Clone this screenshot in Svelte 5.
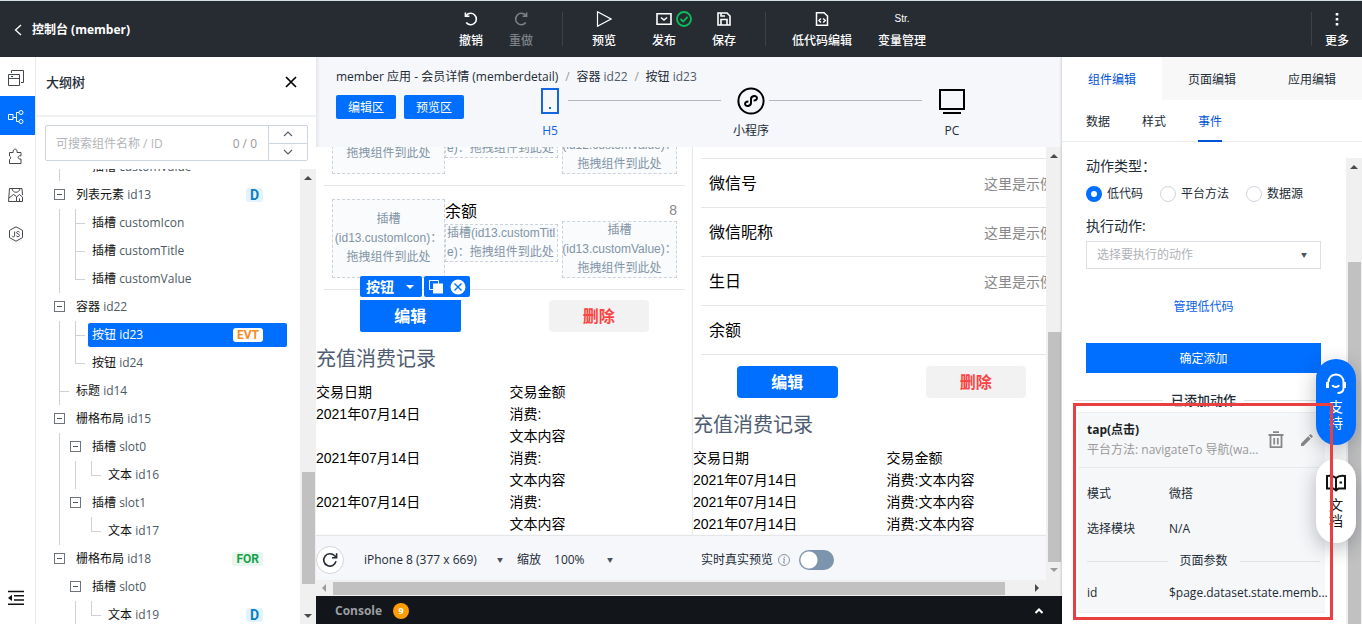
<script lang="ts">
  type Guide = 'line' | 'tee' | 'elbow' | 'box' | 'blank';
  type Node = { name: string; id: string; guides: Guide[]; badge?: string };

  const nodes: Node[] = [
    { name: '插槽', id: 'customValue', guides: ['line', 'elbow'] },
    { name: '列表元素', id: 'id13', guides: ['box'], badge: 'D' },
    { name: '插槽', id: 'customIcon', guides: ['line', 'tee'] },
    { name: '插槽', id: 'customTitle', guides: ['line', 'tee'] },
    { name: '插槽', id: 'customValue', guides: ['line', 'elbow'] },
    { name: '容器', id: 'id22', guides: ['box'] },
    { name: '按钮', id: 'id23', guides: ['line', 'tee'], badge: 'EVT' },
    { name: '按钮', id: 'id24', guides: ['line', 'elbow'] },
    { name: '标题', id: 'id14', guides: ['tee'] },
    { name: '栅格布局', id: 'id15', guides: ['box'] },
    { name: '插槽', id: 'slot0', guides: ['line', 'box'] },
    { name: '文本', id: 'id16', guides: ['line', 'line', 'elbow'] },
    { name: '插槽', id: 'slot1', guides: ['line', 'box'] },
    { name: '文本', id: 'id17', guides: ['line', 'blank', 'elbow'] },
    { name: '栅格布局', id: 'id18', guides: ['box'], badge: 'FOR' },
    { name: '插槽', id: 'slot0', guides: ['blank', 'box'] },
    { name: '文本', id: 'id19', guides: ['blank', 'line', 'elbow'], badge: 'D' },
  ];
  let selected = 'id23';

  const slotItems = ['id12', 'id13'];
  const fields = [
    { label: '微信号', value: '这里是示例' },
    { label: '微信昵称', value: '这里是示例' },
    { label: '生日', value: '这里是示例' },
    { label: '余额', value: '' },
  ];
  const dates = ['2021年07月14日', '2021年07月14日', '2021年07月14日'];

  const panelTabs = ['组件编辑', '页面编辑', '应用编辑'];
  let panelTab = '组件编辑';
  const subTabs = ['数据', '样式', '事件'];
  let subTab = '事件';
  const actionTypes = ['低代码', '平台方法', '数据源'];
  let actionType = '低代码';

  let keyword = '';
  let livePreview = false;
</script>

{#snippet caret(dir: string)}
  <svg class="caret" width="8" height="8" viewBox="0 0 8 8" fill="currentColor" aria-hidden="true">
    {#if dir === 'up'}<path d="M0 6L4 2L8 6Z" />
    {:else if dir === 'down'}<path d="M0 2L4 6L8 2Z" />
    {:else if dir === 'left'}<path d="M6 0L2 4L6 8Z" />
    {:else}<path d="M2 0L6 4L2 8Z" />{/if}
  </svg>
{/snippet}

{#snippet records(inline: boolean)}
  <h2 class="records_title">充值消费记录</h2>
  <div class="records">
    <div>交易日期</div>
    <div>交易金额</div>
    {#each dates as date}
      <div>{date}</div>
      <div>消费:{#if !inline}<br />{/if}文本内容</div>
    {/each}
  </div>
{/snippet}

<div class="app">
  <header class="header">
    <div class="header_left">
      <a href="#console" class="back">
        <svg width="8" height="12" viewBox="0 0 8 12" fill="none" stroke="currentColor" stroke-width="1.3"><path d="M7 1L1.5 6L7 11" /></svg>
        控制台 (member)
      </a>
    </div>
    <nav class="tools">
      <button class="tool">
        <svg width="16" height="16" viewBox="0 0 16 16" fill="none" stroke="currentColor" stroke-width="1.6"><path d="M3.4 4.2A5.7 5.7 0 1 1 3.2 11.6M2.4 1.5V5.2H6.4" /></svg>
        撤销
      </button>
      <button class="tool" disabled>
        <svg width="16" height="16" viewBox="0 0 16 16" fill="none" stroke="currentColor" stroke-width="1.6"><path d="M12.6 4.2A5.7 5.7 0 1 0 12.8 11.6M13.6 1.5V5.2H9.6" /></svg>
        重做
      </button>
      <span class="sep sep_a"></span>
      <button class="tool wide">
        <svg width="16" height="16" viewBox="0 0 16 16" fill="none" stroke="currentColor" stroke-width="1.2"><path d="M1.5 0.8L15 8L1.5 15.2Z" /></svg>
        预览
      </button>
      <button class="tool wide">
        <span class="publish">
          <svg width="16" height="16" viewBox="0 0 16 16" fill="none" stroke="currentColor" stroke-width="1.6"><path d="M1 2.8H15V13.2H1ZM5 6.5L8 9L11 6.5" /></svg>
          <svg class="ok" width="16" height="16" viewBox="0 0 16 16" fill="none" stroke="#0abf5b" stroke-width="1.8"><circle cx="8" cy="8" r="7" /><path d="M4.5 8L7.2 10.5L11.6 5.8" /></svg>
        </span>
        发布
      </button>
      <button class="tool wide">
        <svg width="16" height="16" viewBox="0 0 16 16" fill="none" stroke="currentColor" stroke-width="1.6"><path d="M2 2H11L14 5V14H2ZM5 14V8.5H11V14M5 2V5H9" /></svg>
        保存
      </button>
      <span class="sep sep_b"></span>
      <button class="tool widest">
        <svg width="16" height="16" viewBox="0 0 16 16" fill="none" stroke="currentColor" stroke-width="1.5"><path d="M2.5 1.8H10L13.5 5V14.2H2.5ZM7 7.5L5 9.5L7 11.5M9.2 7.5L11.2 9.5L9.2 11.5" /></svg>
        低代码编辑
      </button>
      <button class="tool widest">
        <span class="str">Str.</span>
        变量管理
      </button>
    </nav>
    <div class="header_right">
      <span class="sep"></span>
      <button class="tool">
        <svg width="16" height="16" viewBox="0 0 16 16" fill="currentColor"><path d="M6.7 2H9.3V4.6H6.7ZM6.7 7H9.3V9.6H6.7ZM6.7 12H9.3V14.6H6.7Z" /></svg>
        更多
      </button>
    </div>
  </header>

  <div class="body">
    <nav class="rail">
      <button aria-label="页面">
        <svg width="16" height="16" viewBox="0 0 16 16" fill="none" stroke="currentColor"><path d="M0.5 4.5H11.5V15.5H0.5ZM0.5 8.5H11.5M3 6.5H5M3.5 3V0.5H15.5V12.5H13" /></svg>
      </button>
      <button class="active" aria-label="大纲树">
        <svg width="16" height="16" viewBox="0 0 16 16" fill="none" stroke="currentColor"><path d="M0.5 5.5H5V10.5H0.5ZM5 8.5H8M11 3.5H8.5V12.5H11" /><circle cx="13" cy="3.5" r="2" /><circle cx="13" cy="12.5" r="2" /></svg>
      </button>
      <button aria-label="组件">
        <svg width="16" height="16" viewBox="0 0 16 16" fill="none" stroke="currentColor"><path d="M1.5 4.5H5.2C4.2 0 10 0 9 4.5H13V7.8C9.2 7 9.2 11.8 13 11V15.5H1.5V11.5C3.2 10.5 3.2 9 1.5 8Z" /></svg>
      </button>
      <button aria-label="素材">
        <svg width="16" height="16" viewBox="0 0 16 16" fill="none" stroke="currentColor"><path d="M8.5 14.5H0.5L1.5 1.5H14L14.5 8M4 1.5C4.5 6.5 11.5 6.5 12 1.5M1 11L5.5 7.5L8.5 9.5M8.5 14.5V10L11.5 7.5L14.5 10V14.5ZM11.5 14V11.5" /></svg>
      </button>
      <button aria-label="脚本">
        <svg width="16" height="16" viewBox="0 0 16 16" fill="none" stroke="currentColor"><path d="M8 0.8L14.5 4.4V11.6L8 15.2L1.5 11.6V4.4ZM6.6 5.5V9.8C6.6 11.2 4.4 11.2 4.2 9.8M11.5 6.2C10.5 5 8.5 5.4 8.6 6.8C8.8 8.2 11.5 7.8 11.5 9.5C11.4 11 9 11 8.3 9.8" /></svg>
      </button>
      <button class="collapse" aria-label="收起">
        <svg width="18" height="16" viewBox="0 0 18 16" fill="none" stroke="currentColor" stroke-width="1.5"><path d="M1 1.5H17M7 5.8H17M7 10H17M1 14.3H17" /><path d="M5 4.8V11L1 7.9Z" fill="currentColor" stroke="none" /></svg>
      </button>
    </nav>

    <aside class="outline">
      <div class="outline_head">
        <h1>大纲树</h1>
        <button class="close" aria-label="关闭">
          <svg width="12" height="12" viewBox="0 0 12 12" fill="none" stroke="currentColor" stroke-width="1.7"><path d="M1 1L11 11M11 1L1 11" /></svg>
        </button>
      </div>
      <div class="search">
        <input type="text" placeholder="可搜索组件名称 / ID" aria-label="搜索组件" bind:value={keyword} />
        <span class="count">0 / 0</span>
        <div class="stepper">
          <button aria-label="上一个"><svg width="10" height="6" viewBox="0 0 10 6" fill="none" stroke="currentColor" stroke-width="1.2"><path d="M1 5L5 1L9 5" /></svg></button>
          <button aria-label="下一个"><svg width="10" height="6" viewBox="0 0 10 6" fill="none" stroke="currentColor" stroke-width="1.2"><path d="M1 1L5 5L9 1" /></svg></button>
        </div>
      </div>
      <div class="tree_wrap">
        <ul class="tree">
          {#each nodes as node}
            <li class="node">
              {#each node.guides as guide}
                <span class="guide {guide}"></span>
              {/each}
              <button class="node_label" class:selected={node.id === selected} on:click={() => (selected = node.id)}>
                <span>{node.name} <span class="node_id">{node.id}</span></span>
                {#if node.badge}<span class="badge {node.badge}">{node.badge}</span>{/if}
              </button>
            </li>
          {/each}
        </ul>
        <div class="vbar">
          {@render caret('up')}
          <div class="thumb tree_thumb"></div>
          {@render caret('down')}
        </div>
      </div>
    </aside>

    <main class="canvas">
      <div class="canvas_head">
        <div class="crumbs">
          <span>member 应用 - 会员详情 (memberdetail)</span>
          <i>/</i>
          <span>容器 <em>id22</em></span>
          <i>/</i>
          <span>按钮 <em>id23</em></span>
        </div>
        <div class="canvas_bar">
          <button class="area">编辑区</button>
          <button class="area">预览区</button>
          <div class="devices">
            <button class="device current">
              <svg width="28" height="28" viewBox="0 0 28 28" fill="none" stroke="currentColor" stroke-width="2"><path d="M6 2H22V26H6Z" /><path d="M13 21H15" /></svg>
              H5
            </button>
            <span class="rule"></span>
            <button class="device">
              <svg width="28" height="28" viewBox="0 0 28 28" fill="none" stroke="currentColor" stroke-width="2"><circle cx="14" cy="14" r="12.6" /><path d="M11.4 14.4C6.5 14.5 7.5 19.5 11 19C13 18.6 14 17.5 14 16V12C14 10.5 15 9.3 17 9C20.5 8.5 21.5 13.5 16.6 13.6" /></svg>
              小程序
            </button>
            <span class="rule"></span>
            <button class="device">
              <svg width="28" height="28" viewBox="0 0 28 28" fill="none" stroke="currentColor" stroke-width="2"><path d="M2 3H26V22H2Z M5 26H23" /></svg>
              PC
            </button>
          </div>
        </div>
      </div>

      <div class="stage">
        <div class="stage_main">
          <div class="phones">
            <section class="phone">
              <div class="slot_list">
                {#each slotItems as id}
                  <div class="slot_item">
                    <div class="slot icon_slot">插槽<br />({id}.customIcon)：<br />拖拽组件到此处</div>
                    <div class="slot_mid">
                      <div class="slot_name">余额</div>
                      <div class="slot title_slot">插槽({id}.customTitl<br />e)：拖拽组件到此处</div>
                    </div>
                    <div class="slot_end">
                      <div class="slot_num">8</div>
                      <div class="slot">插槽<br />({id}.customValue)：<br />拖拽组件到此处</div>
                    </div>
                  </div>
                {/each}
              </div>
              <div class="actions">
                <div class="action">
                  <button class="primary square">编辑</button>
                  <div class="picker">
                    <button class="picker_name">按钮 {@render caret('down')}</button>
                    <span class="picker_tools">
                      <button aria-label="复制">
                        <svg width="16" height="16" viewBox="0 0 16 16"><path d="M1.5 1.5H10.5V10.5H1.5Z" fill="none" stroke="#fff" /><path d="M5 4.5H15V14.5H5Z" fill="#fff" /></svg>
                      </button>
                      <button aria-label="删除">
                        <svg width="16" height="16" viewBox="0 0 16 16"><circle cx="8" cy="8" r="7.5" fill="#fff" /><path d="M4.5 4.5L11.5 11.5M11.5 4.5L4.5 11.5" stroke="#006eff" stroke-width="1.4" /></svg>
                      </button>
                    </span>
                  </div>
                </div>
                <div class="action"><button class="danger">删除</button></div>
              </div>
              {@render records(false)}
            </section>

            <section class="phone second">
              <div class="field_list">
                {#each fields as field}
                  <div class="field">
                    <span>{field.label}</span>
                    <span class="field_value">{field.value}</span>
                  </div>
                {/each}
              </div>
              <div class="actions">
                <div class="action"><button class="primary">编辑</button></div>
                <div class="action"><button class="danger">删除</button></div>
              </div>
              {@render records(true)}
            </section>
          </div>

          <div class="status">
            <button class="refresh" aria-label="刷新">
              <svg width="16" height="16" viewBox="0 0 16 16" fill="none" stroke="currentColor" stroke-width="1.6"><path d="M14 9.2A6.2 6.2 0 1 1 12.6 3.8L14.4 5.4M14.6 1.2V5.8H10" /></svg>
            </button>
            <label class="pick model">
              <select aria-label="机型"><option>iPhone 8 (377 x 669)</option></select>
              <span class="tri">▼</span>
            </label>
            <label class="pick zoom">
              缩放
              <select><option>100%</option></select>
              <span class="tri">▼</span>
            </label>
            <label class="live">
              实时真实预览
              <svg width="12" height="12" viewBox="0 0 12 12" fill="none" stroke="#8a95a3"><circle cx="6" cy="6" r="5.5" /><path d="M5 5H6.5L5.6 9H7M6.3 2.6V3.8" /></svg>
              <input type="checkbox" class="switch" bind:checked={livePreview} />
            </label>
          </div>
        </div>
        <div class="vbar stage_vbar">
          {@render caret('up')}
          <div class="thumb stage_thumb"></div>
          <span class="faded">{@render caret('down')}</span>
        </div>
      </div>
      <div class="hbar">
        <span class="faded">{@render caret('left')}</span>
        <div class="hthumb"></div>
        {@render caret('right')}
      </div>

      <footer class="console">
        <b>Console</b>
        <span class="console_count">9</span>
        <button aria-label="展开控制台">
          <svg width="8" height="6" viewBox="0 0 8 6" fill="none" stroke="currentColor" stroke-width="2"><path d="M0.5 5L4 1.5L7.5 5" /></svg>
        </button>
      </footer>
    </main>

    <aside class="panel">
      <div class="tabs">
        {#each panelTabs as tab}
          <button class:active={tab === panelTab} on:click={() => (panelTab = tab)}>{tab}</button>
        {/each}
      </div>
      <div class="subtabs">
        {#each subTabs as tab}
          <button class:active={tab === subTab} on:click={() => (subTab = tab)}>{tab}</button>
        {/each}
      </div>
      <div class="panel_body">
        <div class="form">
          <div class="form_label">动作类型：</div>
          <div class="radios">
            {#each actionTypes as type}
              <label><input type="radio" value={type} bind:group={actionType} />{type}</label>
            {/each}
          </div>
          <label class="form_label" for="action">执行动作:</label>
          <div class="pick action_pick">
            <select id="action"><option>选择要执行的动作</option></select>
            <span class="tri">▼</span>
          </div>
          <a class="manage" href="#lowcode">管理低代码</a>
          <button class="confirm">确定添加</button>
          <div class="divider added"><span>已添加动作</span></div>

          <div class="card">
            <div class="card_head">
              <div class="card_text">
                <b>tap(点击)</b>
                <p>平台方法: navigateTo 导航(wa...</p>
              </div>
              <button aria-label="删除动作">
                <svg width="16" height="18" viewBox="0 0 16 18" fill="none" stroke="currentColor" stroke-width="1.8"><path d="M0.5 4H15.5M5 1.2H11M2.5 4V16.2H13.5V4M6.2 7V13.5M9.8 7V13.5" /></svg>
              </button>
              <button aria-label="编辑动作">
                <svg width="12" height="12" viewBox="0 0 12 12" fill="currentColor"><path d="M0 12V9.5L7.2 2.3L9.7 4.8L2.5 12ZM8 1.5L9.5 0L12 2.5L10.5 4Z" /></svg>
              </button>
            </div>
            <dl>
              <dt>模式</dt>
              <dd>微搭</dd>
              <dt>选择模块</dt>
              <dd>N/A</dd>
            </dl>
            <div class="divider params"><span>页面参数</span></div>
            <dl>
              <dt>id</dt>
              <dd>$page.dataset.state.memb...</dd>
            </dl>
            <div class="marker"></div>
          </div>
        </div>
        <div class="vbar panel_vbar">
          {@render caret('up')}
          <div class="thumb panel_thumb"></div>
        </div>
      </div>
      <div class="floats">
        <a href="#support" class="float support">
          <svg width="22" height="22" viewBox="0 0 22 22" fill="none" stroke="currentColor" stroke-width="2"><path d="M3.5 9C3.5 -1 18.5 -1 18.5 9V15C18.5 18.5 16 20 12.5 20M7.5 12C8.5 14.8 13 14.8 14 12" /><path d="M2.5 9V15M19.5 9V15" stroke-width="3" /></svg>
          <span>支持</span>
        </a>
        <a href="#docs" class="float docs">
          <svg width="22" height="20" viewBox="0 0 22 20" fill="none" stroke="currentColor" stroke-width="2"><path d="M11 5C9 3 5 2.5 2 3V15.5H8.5L11 17.5L13.5 15.5H20V3C17 2.5 13 3 11 5V17M14.5 9.5H17" /></svg>
          <span>文档</span>
        </a>
      </div>
    </aside>
  </div>
</div>

<style>
  :global(body) {
    margin: 0;
  }
  .app {
    height: 100vh;
    display: flex;
    flex-direction: column;
    overflow: hidden;
    color: #222b36;
    background: #fff;
    font: 12px/16px "Open Sans", "Noto Sans CJK SC", sans-serif;
  }
  .app *, .app {
    box-sizing: border-box;
  }
  button {
    font: inherit;
    color: inherit;
    background: none;
    border: 0;
    padding: 0;
    cursor: pointer;
  }
  svg {
    display: block;
    flex: none;
  }
  select, input {
    font: inherit;
    color: inherit;
    margin: 0;
  }
  h1, h2, p, ul, dl, dd {
    margin: 0;
    padding: 0;
  }

  /* header */
  .header {
    flex: none;
    height: 57px;
    display: flex;
    align-items: center;
    background: #272c33;
    border-top: 1px solid #d5dfe6;
    color: #fff;
  }
  .header_left, .header_right {
    flex: 1 1 0;
    display: flex;
    align-items: center;
  }
  .header_right {
    justify-content: flex-end;
  }
  .back {
    display: flex;
    align-items: center;
    gap: 10px;
    padding: 2px 0 0 14px;
    color: #fff;
    font-weight: 700;
    text-decoration: none;
  }
  .tools {
    display: flex;
    align-items: center;
    padding-left: 26px;
  }
  .tool {
    width: 50px;
    padding-top: 1px;
    display: flex;
    flex-direction: column;
    align-items: center;
    gap: 6px;
    font-weight: 500;
    white-space: nowrap;
  }
  .tool:disabled {
    color: #7d8186;
  }
  .wide {
    width: 60px;
  }
  .widest {
    width: 80px;
  }
  .publish {
    position: relative;
  }
  .ok {
    position: absolute;
    top: 0;
    left: 20px;
  }
  .str {
    font: 10px/16px "Liberation Sans", Arial, sans-serif;
  }
  .sep {
    width: 1px;
    height: 34px;
    background: #3d4249;
  }
  .sep_a {
    margin: 0 11px 0 16px;
  }
  .sep_b {
    margin: 0 16px 0 11px;
  }

  .body {
    flex: 1;
    min-height: 0;
    display: flex;
  }

  /* left rail */
  .rail {
    flex: none;
    width: 36px;
    display: flex;
    flex-direction: column;
    border-right: 1px solid #e7e9ec;
    color: #43494f;
  }
  .rail button {
    height: 39px;
    padding: 2px 0 0 8px;
  }
  .rail .active {
    background: #006eff;
    color: #fff;
  }
  .rail .collapse {
    margin-top: auto;
    margin-bottom: 8px;
    padding-left: 7px;
    color: #111;
  }

  /* outline tree */
  .outline {
    flex: none;
    width: 280px;
    display: flex;
    flex-direction: column;
  }
  .outline_head {
    flex: none;
    height: 60px;
    padding: 0 19px 8px 10px;
    display: flex;
    align-items: center;
    justify-content: space-between;
    border-bottom: 2px solid #f1f2f4;
  }
  h1 {
    font-size: 13px;
    font-weight: 500;
  }
  .close {
    color: #000;
  }
  .search {
    flex: none;
    height: 36px;
    margin: 8px 8px 8px 9px;
    display: flex;
    align-items: center;
    border: 1px solid #cfd5de;
    border-radius: 2px;
  }
  .search input {
    flex: 1;
    min-width: 0;
    padding: 2px 0 0 10px;
    border: 0;
    outline: none;
  }
  .search input::placeholder {
    color: #b2b5b9;
  }
  .count {
    padding: 2px 11px 0 0;
    color: #999;
  }
  .stepper {
    width: 39px;
    align-self: stretch;
    display: flex;
    flex-direction: column;
    border-left: 1px solid #cfd5de;
    color: #58616b;
  }
  .stepper button {
    flex: 1;
    display: flex;
    align-items: center;
    justify-content: center;
  }
  .stepper button + button {
    border-top: 1px solid #cfd5de;
  }
  .tree_wrap {
    flex: 1;
    min-height: 0;
    display: flex;
    overflow: hidden;
  }
  .tree {
    flex: 1;
    margin-top: -16px;
    padding: 0 13px 0 16px;
    list-style: none;
  }
  .node {
    height: 28px;
    display: flex;
    align-items: center;
  }
  .guide {
    position: relative;
    flex: none;
    width: 16px;
    height: 28px;
  }
  .line::before, .tee::before, .elbow::before {
    content: "";
    position: absolute;
    left: 7px;
    top: 0;
    bottom: 0;
    border-left: 1px solid #cdd0d4;
  }
  .elbow::before {
    bottom: 13px;
  }
  .tee::after, .elbow::after {
    content: "";
    position: absolute;
    left: 7px;
    top: 14px;
    width: 10px;
    border-top: 1px solid #cdd0d4;
  }
  .box::before {
    content: "";
    position: absolute;
    left: 2px;
    top: 8px;
    width: 9px;
    height: 9px;
    border: 1px solid #6d747c;
    background: linear-gradient(#555, #555) center / 5px 1px no-repeat;
  }
  .node_label {
    flex: 1;
    height: 24px;
    margin-left: 4px;
    padding: 0 24px 0 4px;
    display: flex;
    align-items: center;
    justify-content: space-between;
    border-radius: 2px;
    text-align: left;
    color: #111;
  }
  .node_id {
    color: #4d5a66;
  }
  .selected, .selected .node_id {
    background: #006eff;
    color: #fff;
  }
  .badge {
    padding: 0 4px;
    border-radius: 3px;
    font: 700 12px/14px Roboto, sans-serif;
  }
  .D {
    background: #e3f3fd;
    color: #0a80c4;
    font-size: 14px;
  }
  .FOR {
    background: #e8f7ee;
    color: #18a04a;
  }
  .EVT {
    background: #fff;
    color: #f58a1f;
  }

  /* scroll bars */
  .caret {
    color: #4a4a4a;
  }
  .vbar {
    flex: none;
    width: 16px;
    padding: 5px 0 4px;
    display: flex;
    flex-direction: column;
    align-items: center;
    background: #f0f0f1;
  }
  .thumb {
    width: 13px;
    background: #c1c1c1;
  }
  .faded .caret {
    color: #9b9b9b;
  }
  .tree_thumb {
    height: 112px;
    margin: auto 0 28px;
  }
  .stage_vbar {
    padding-bottom: 6px;
  }
  .stage_thumb {
    height: 230px;
    margin: auto 0 4px;
  }
  .hbar {
    flex: none;
    height: 16px;
    padding: 0 21px 0 4px;
    display: flex;
    align-items: center;
    background: #f0f0f1;
  }
  .hthumb {
    flex: 1;
    height: 13px;
    margin: 0 28px 0 5px;
    background: #c1c1c1;
  }

  /* canvas */
  .canvas {
    flex: 1;
    min-width: 0;
    display: flex;
    flex-direction: column;
    background: #f6f7fa;
    box-shadow: inset 4px 0 4px -3px rgba(0, 0, 0, 0.1);
  }
  .canvas_head {
    flex: none;
    height: 90px;
    padding: 12px 92px 0 20px;
  }
  .crumbs {
    display: flex;
    white-space: nowrap;
  }
  .crumbs i {
    width: 18px;
    text-align: center;
    color: #999;
    font-style: normal;
  }
  .crumbs em {
    font-style: normal;
    color: #4d5a66;
  }
  .canvas_bar {
    display: flex;
    align-items: flex-start;
    gap: 8px;
    padding-top: 2px;
  }
  .area {
    width: 60px;
    height: 24px;
    margin-top: 8px;
    padding-top: 2px;
    border-radius: 2px;
    background: #006eff;
    color: #fff;
  }
  .devices {
    flex: 1;
    display: flex;
    margin-left: 60px;
  }
  .device {
    width: 36px;
    display: flex;
    flex-direction: column;
    align-items: center;
    gap: 8px;
    white-space: nowrap;
  }
  .device svg {
    color: #000;
  }
  .current, .current svg {
    color: #1465e0;
  }
  .rule {
    flex: 1;
    height: 1px;
    margin: 13px 12px 0 0;
    background: #b4b8be;
  }
  .stage {
    flex: 1;
    min-height: 0;
    display: flex;
  }
  .stage_main {
    flex: 1;
    min-width: 0;
    display: flex;
    flex-direction: column;
  }
  .phones {
    flex: 1;
    min-height: 0;
    display: flex;
    overflow: hidden;
    background: #fff;
    color: #000;
    font-family: "Liberation Sans", Arial, "Noto Sans CJK SC", sans-serif;
  }
  .phone {
    flex: none;
    width: 377px;
  }
  .second {
    box-shadow: -1px 0 1px #e8e9ec;
  }
  .slot_list {
    margin: -65px 8px 0;
  }
  .slot_item {
    display: flex;
    align-items: flex-start;
    padding: 13px 8px 11px;
    border-bottom: 1px solid #e6e6e6;
  }
  .slot {
    line-height: 19px;
    text-align: center;
    white-space: nowrap;
    overflow: hidden;
    color: #8294a5;
    background: #f9fbfd;
    outline: 1px dashed #ccd3da;
    outline-offset: -1px;
  }
  .icon_slot {
    flex: 1;
    padding: 11px 0;
  }
  .slot_mid {
    flex: 1;
  }
  .slot_name {
    font-size: 16px;
    line-height: 25px;
  }
  .title_slot {
    padding-left: 2px;
    text-align: left;
  }
  .slot_end {
    width: 119px;
    padding-left: 4px;
  }
  .slot_num {
    font-size: 14px;
    line-height: 22px;
    text-align: right;
    color: #888;
  }
  .actions {
    display: flex;
    padding-top: 10px;
  }
  .action {
    position: relative;
    flex: 1;
    padding: 0 44px;
  }
  .primary, .danger {
    width: 100%;
    height: 32px;
    padding-top: 2px;
    border-radius: 4px;
    font-size: 16px;
    font-weight: 700;
    background: #006eff;
    color: #fff;
  }
  .square {
    border-radius: 0 0 2px 2px;
  }
  .danger {
    background: #f2f2f2;
    color: #fa4444;
  }
  .picker {
    position: absolute;
    left: 44px;
    bottom: 35px;
    display: flex;
    gap: 2px;
    color: #fff;
  }
  .picker_name, .picker_tools {
    height: 21px;
    display: flex;
    align-items: center;
    gap: 6px;
    padding: 0 4px;
    border-radius: 2px;
    background: #006eff;
  }
  .picker_name {
    gap: 12px;
    padding: 0 8px 0 6px;
    font-size: 14px;
    font-weight: 700;
  }
  .picker_name .caret {
    color: #fff;
  }
  .records_title {
    margin: 13px 0 8px;
    font-size: 20px;
    line-height: 28px;
    font-weight: 400;
    color: #4f5d72;
  }
  .records {
    display: grid;
    grid-template-columns: 1fr 1fr;
    column-gap: 10px;
    font-size: 14px;
    line-height: 22px;
  }
  .field_list {
    margin: 11px 8px 1px;
    border-top: 1px solid #e6e6e6;
  }
  .field {
    height: 49px;
    padding: 2px 8px 0;
    display: flex;
    align-items: center;
    justify-content: space-between;
    border-bottom: 1px solid #e6e6e6;
    font-size: 16px;
  }
  .field_value {
    font-size: 14px;
    color: #888;
  }
  .status {
    flex: none;
    height: 44px;
    display: flex;
    align-items: center;
    padding-bottom: 4px;
    padding-top: 8px;
    box-shadow: 0 -1px 1px #e4e6e9;
    background: #f6f7fa;
  }
  .refresh {
    width: 28px;
    height: 28px;
    display: flex;
    align-items: center;
    justify-content: center;
    border: 1px solid #d3d6da;
    border-radius: 50%;
    background: #fff;
  }
  .pick {
    display: flex;
    align-items: center;
  }
  .pick select {
    flex: 1;
    appearance: none;
    border: 0;
    padding: 0;
    background: none;
    outline: none;
  }
  .tri {
    font-size: 6px;
    color: #4a525b;
    pointer-events: none;
  }
  .model {
    width: 139px;
    margin: 0 14px 0 20px;
  }
  .zoom {
    width: 96px;
    gap: 13px;
  }
  .live {
    display: flex;
    align-items: center;
    gap: 5px;
    margin-left: 88px;
  }
  .switch {
    appearance: none;
    width: 35px;
    height: 20px;
    margin-left: 4px;
    border-radius: 10px;
    background: radial-gradient(circle at 10px 10px, #fff 8px, transparent 9px) #7c94ad;
  }
  .switch:checked {
    background: radial-gradient(circle at 25px 10px, #fff 8px, transparent 9px) #006eff;
  }
  .console {
    flex: none;
    height: 28px;
    padding: 2px 19px 0;
    display: flex;
    align-items: center;
    gap: 11px;
    background: #121519;
    color: #9b9ea2;
  }
  .console_count {
    width: 16px;
    border-radius: 50%;
    background: #ff9c00;
    color: #fff;
    font-size: 9px;
    font-weight: 700;
    text-align: center;
  }
  .console button {
    margin-left: auto;
    color: #fff;
  }

  /* right panel */
  .panel {
    position: relative;
    flex: none;
    width: 300px;
    display: flex;
    flex-direction: column;
    background: #fff;
    box-shadow: -1px 0 2px rgba(0, 0, 0, 0.15);
  }
  .tabs {
    flex: none;
    display: flex;
    height: 43px;
  }
  .tabs button {
    flex: 1;
    padding-top: 2px;
    background: #f8f8f9;
  }
  .tabs .active {
    background: #fff;
    color: #0052d9;
  }
  .subtabs {
    flex: none;
    height: 42px;
    display: flex;
    gap: 32px;
    padding-left: 24px;
    border-bottom: 1px solid #e9ebee;
  }
  .subtabs button {
    padding-top: 2px;
    margin-bottom: -1px;
  }
  .subtabs .active {
    color: #0052d9;
    box-shadow: inset 0 -2px #0052d9;
  }
  .panel_body {
    flex: 1;
    min-height: 0;
    display: flex;
    overflow: hidden;
  }
  .form {
    flex: 1;
    min-width: 0;
    padding: 14px 25px 0 24px;
  }
  .form_label {
    display: block;
    font-size: 14px;
    line-height: 20px;
  }
  .radios {
    display: flex;
    gap: 17px;
    padding: 10px 0 14px;
    white-space: nowrap;
  }
  .radios label {
    display: flex;
    align-items: center;
    gap: 5px;
  }
  .radios input {
    appearance: none;
    width: 16px;
    height: 16px;
    border: 1px solid #cfd5de;
    border-radius: 50%;
  }
  .radios input:checked {
    border: 5px solid #006eff;
  }
  .action_pick {
    height: 28px;
    margin-top: 5px;
    padding: 0 13px 0 10px;
    border: 1px solid #dcdfe4;
    color: #b0b3b8;
  }
  .manage {
    display: block;
    margin: 30px 0 28px;
    color: #0c62e6;
    text-align: center;
    text-decoration: none;
  }
  .confirm {
    width: 100%;
    height: 30px;
    padding-top: 2px;
    background: #006eff;
    color: #fff;
  }
  .divider {
    display: flex;
    align-items: center;
    gap: 8px;
  }
  .divider::before, .divider::after {
    content: "";
    flex: 1;
    border-top: 1px solid #dfe2e5;
  }
  .added {
    margin: 19px -12px 4px;
    font-size: 13px;
    font-weight: 500;
  }
  .card {
    position: relative;
    margin: 0 -4px 0 -8px;
    background: #f6f7f9;
    border-top: 1px solid #eceef0;
    border-bottom: 1px solid #eceef0;
    height: 201px;
  }
  .card_head {
    display: flex;
    align-items: center;
    gap: 17px;
    height: 55px;
    padding: 0 12px 0 9px;
    border-bottom: 1px solid #e8eaed;
    color: #888;
  }
  .card_text {
    flex: 1;
    min-width: 0;
    line-height: 20px;
    white-space: nowrap;
  }
  .card_text b {
    color: #1a1f26;
  }
  .card_text p {
    color: #999;
  }
  dl {
    display: grid;
    grid-template-columns: 82px 1fr;
    row-gap: 19px;
    padding: 18px 0 0 9px;
    white-space: nowrap;
  }
  .params {
    gap: 12px;
    margin: 16px 5px 0 9px;
  }
  .params + dl {
    padding-top: 16px;
  }
  .marker {
    position: absolute;
    inset: -10px -8px -8px -5px;
    z-index: 3;
    border: 3px solid #e83f41;
    pointer-events: none;
  }
  .panel_vbar {
    margin-top: 16px;
    padding-bottom: 0;
  }
  .panel_thumb {
    flex: 1;
    margin-top: 91px;
  }
  .floats {
    position: absolute;
    right: 6px;
    bottom: 81px;
    z-index: 2;
    display: flex;
    flex-direction: column;
    gap: 14px;
  }
  .float {
    width: 40px;
    padding: 14px 0;
    display: flex;
    flex-direction: column;
    align-items: center;
    gap: 4px;
    border-radius: 20px;
    text-decoration: none;
    font-size: 14px;
    box-shadow: 0 6px 20px rgba(20, 30, 50, 0.3);
  }
  .float span {
    width: 14px;
  }
  .support {
    background: #006eff;
    color: #fff;
  }
  .docs {
    background: #fff;
    color: #111;
  }
</style>
